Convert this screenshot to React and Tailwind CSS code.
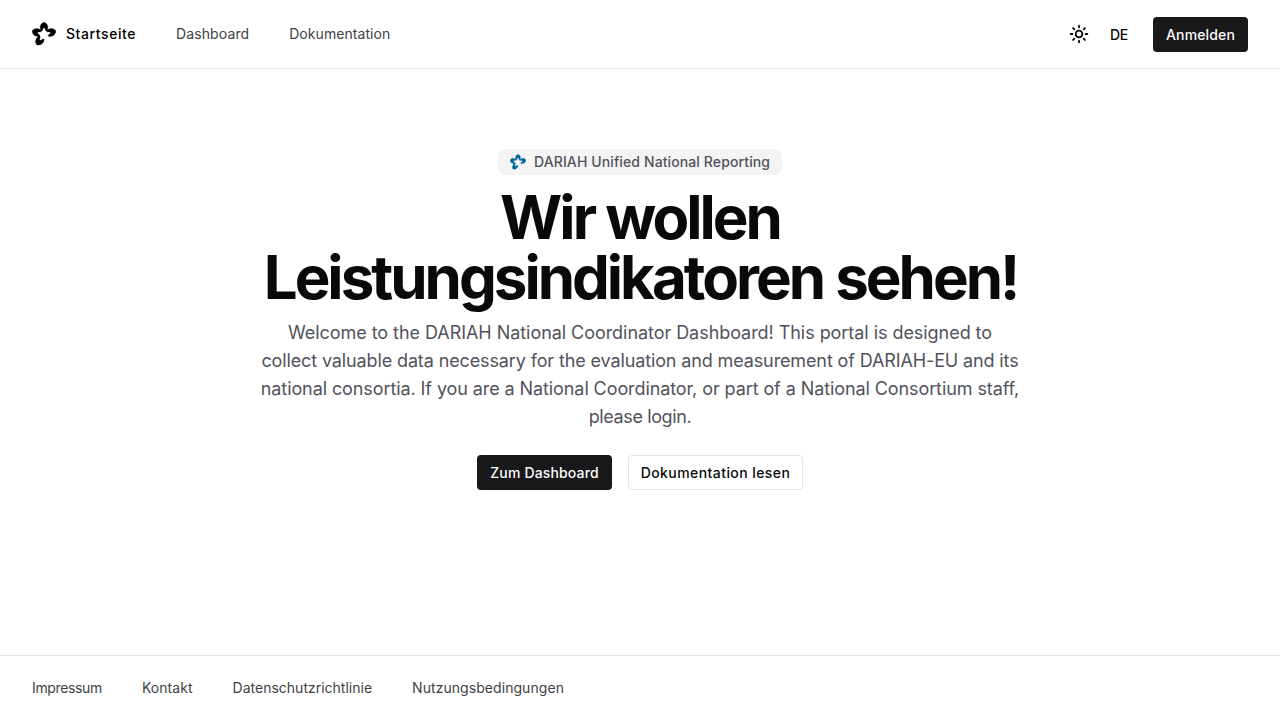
const PETAL =
  'M8.900 8.800C8.200 7.300 8 5.500 8.300 4.100 8.700 2.300 10.100.9 12 .3c1.900.6 3.300 2 3.700 3.800.3 1.400.1 3.200-.6 4.700-.6.5-1.400.2-1.700-.8-.3-1-.5-2.200-1.400-2.200s-1.100 1.200-1.400 2.200c-.3 1-1.100 1.300-1.700.8z'

function Logo({ className }) {
  return (
    <svg viewBox="0 0 24 24" fill="currentColor" stroke="currentColor" strokeWidth="0.3" className={className} aria-hidden="true">
      <path d={PETAL} />
      <path d={PETAL} transform="rotate(72 12 12.700)" />
      <path d={PETAL} transform="rotate(-72 12 12.700)" />
      <path d={PETAL} transform="rotate(-144 12 12.700)" />
    </svg>
  )
}

function Sun() {
  return (
    <svg viewBox="0 0 24 24" fill="none" stroke="currentColor" strokeWidth="2.2" strokeLinecap="round" className="size-5">
      <circle cx="12" cy="12" r="4" />
      <path d="M12 2v2M12 20v2M2 12h2M20 12h2M4.900 4.900l1.400 1.400M17.700 17.700l1.400 1.400M4.900 19.100l1.400-1.400M17.700 6.300l1.400-1.400" />
    </svg>
  )
}

export default function App() {
  return (
    <div className="flex min-h-screen flex-col bg-white font-['Inter',sans-serif] text-sm text-zinc-950">
      <header className="flex h-[69px] items-center justify-between border-b border-zinc-200 px-8">
        <nav className="flex items-center gap-10 tracking-[0.1px] text-zinc-700">
          <a className="flex items-center gap-2.5 font-medium tracking-[0.58px] text-black"><Logo className="size-6" />Startseite</a>
          <a>Dashboard</a>
          <a className="tracking-[0.06px]">Dokumentation</a>
        </nav>
        <div className="flex items-center font-medium">
          <Sun />
          <span className="ml-[21px] pt-0.5 tracking-[-0.3px]">DE</span>
          <button className="ml-[25px] h-[35px] w-[95px] rounded bg-zinc-900 pt-0.5 tracking-[0.14px] text-zinc-50">Anmelden</button>
        </div>
      </header>
      <main className="flex flex-1 flex-col items-center pt-20">
        <div className="flex h-[26px] w-[284px] items-center gap-2 rounded-lg bg-zinc-100 px-3 font-medium tracking-[0.11px] whitespace-nowrap text-zinc-600">
          <Logo className="size-4 shrink-0 text-[#006699]" />DARIAH Unified National Reporting
        </div>
        <h1 className="mt-3 flex w-[768px] flex-col items-center text-6xl leading-[60px] font-bold tracking-tighter whitespace-nowrap">
          <span>Wir wollen </span>
          <span className="pl-px [word-spacing:1px]">Leistungsindikatoren sehen!</span>
        </h1>
        <p className="mt-3 flex w-[768px] flex-col items-center text-lg leading-7 whitespace-nowrap text-zinc-600">
          <span className="tracking-[-0.05px]">Welcome to the DARIAH National Coordinator Dashboard! This portal is designed to </span>
          <span className="tracking-[-0.125px]">collect valuable data necessary for the evaluation and measurement of DARIAH-EU and its </span>
          <span className="tracking-[-0.09px]">national consortia. If you are a National Coordinator, or part of a National Consortium staff, </span>
          <span className="tracking-[-0.38px]">please login.</span>
        </p>
        <div className="mt-6 flex gap-4 font-medium">
          <button className="h-[35px] w-[135px] rounded bg-zinc-900 tracking-[0.15px] text-zinc-50">Zum Dashboard</button>
          <button className="h-[35px] w-[175px] rounded border border-zinc-200 tracking-[0.43px]">Dokumentation lesen</button>
        </div>
      </main>
      <footer className="flex h-[65px] items-center gap-10 border-t border-zinc-200 px-8 text-zinc-700">
        <a className="tracking-[-0.36px]">Impressum</a>
        <a className="tracking-[0.06px]">Kontakt</a>
        <a>Datenschutzrichtlinie</a>
        <a className="tracking-[0.06px]">Nutzungsbedingungen</a>
      </footer>
    </div>
  )
}
